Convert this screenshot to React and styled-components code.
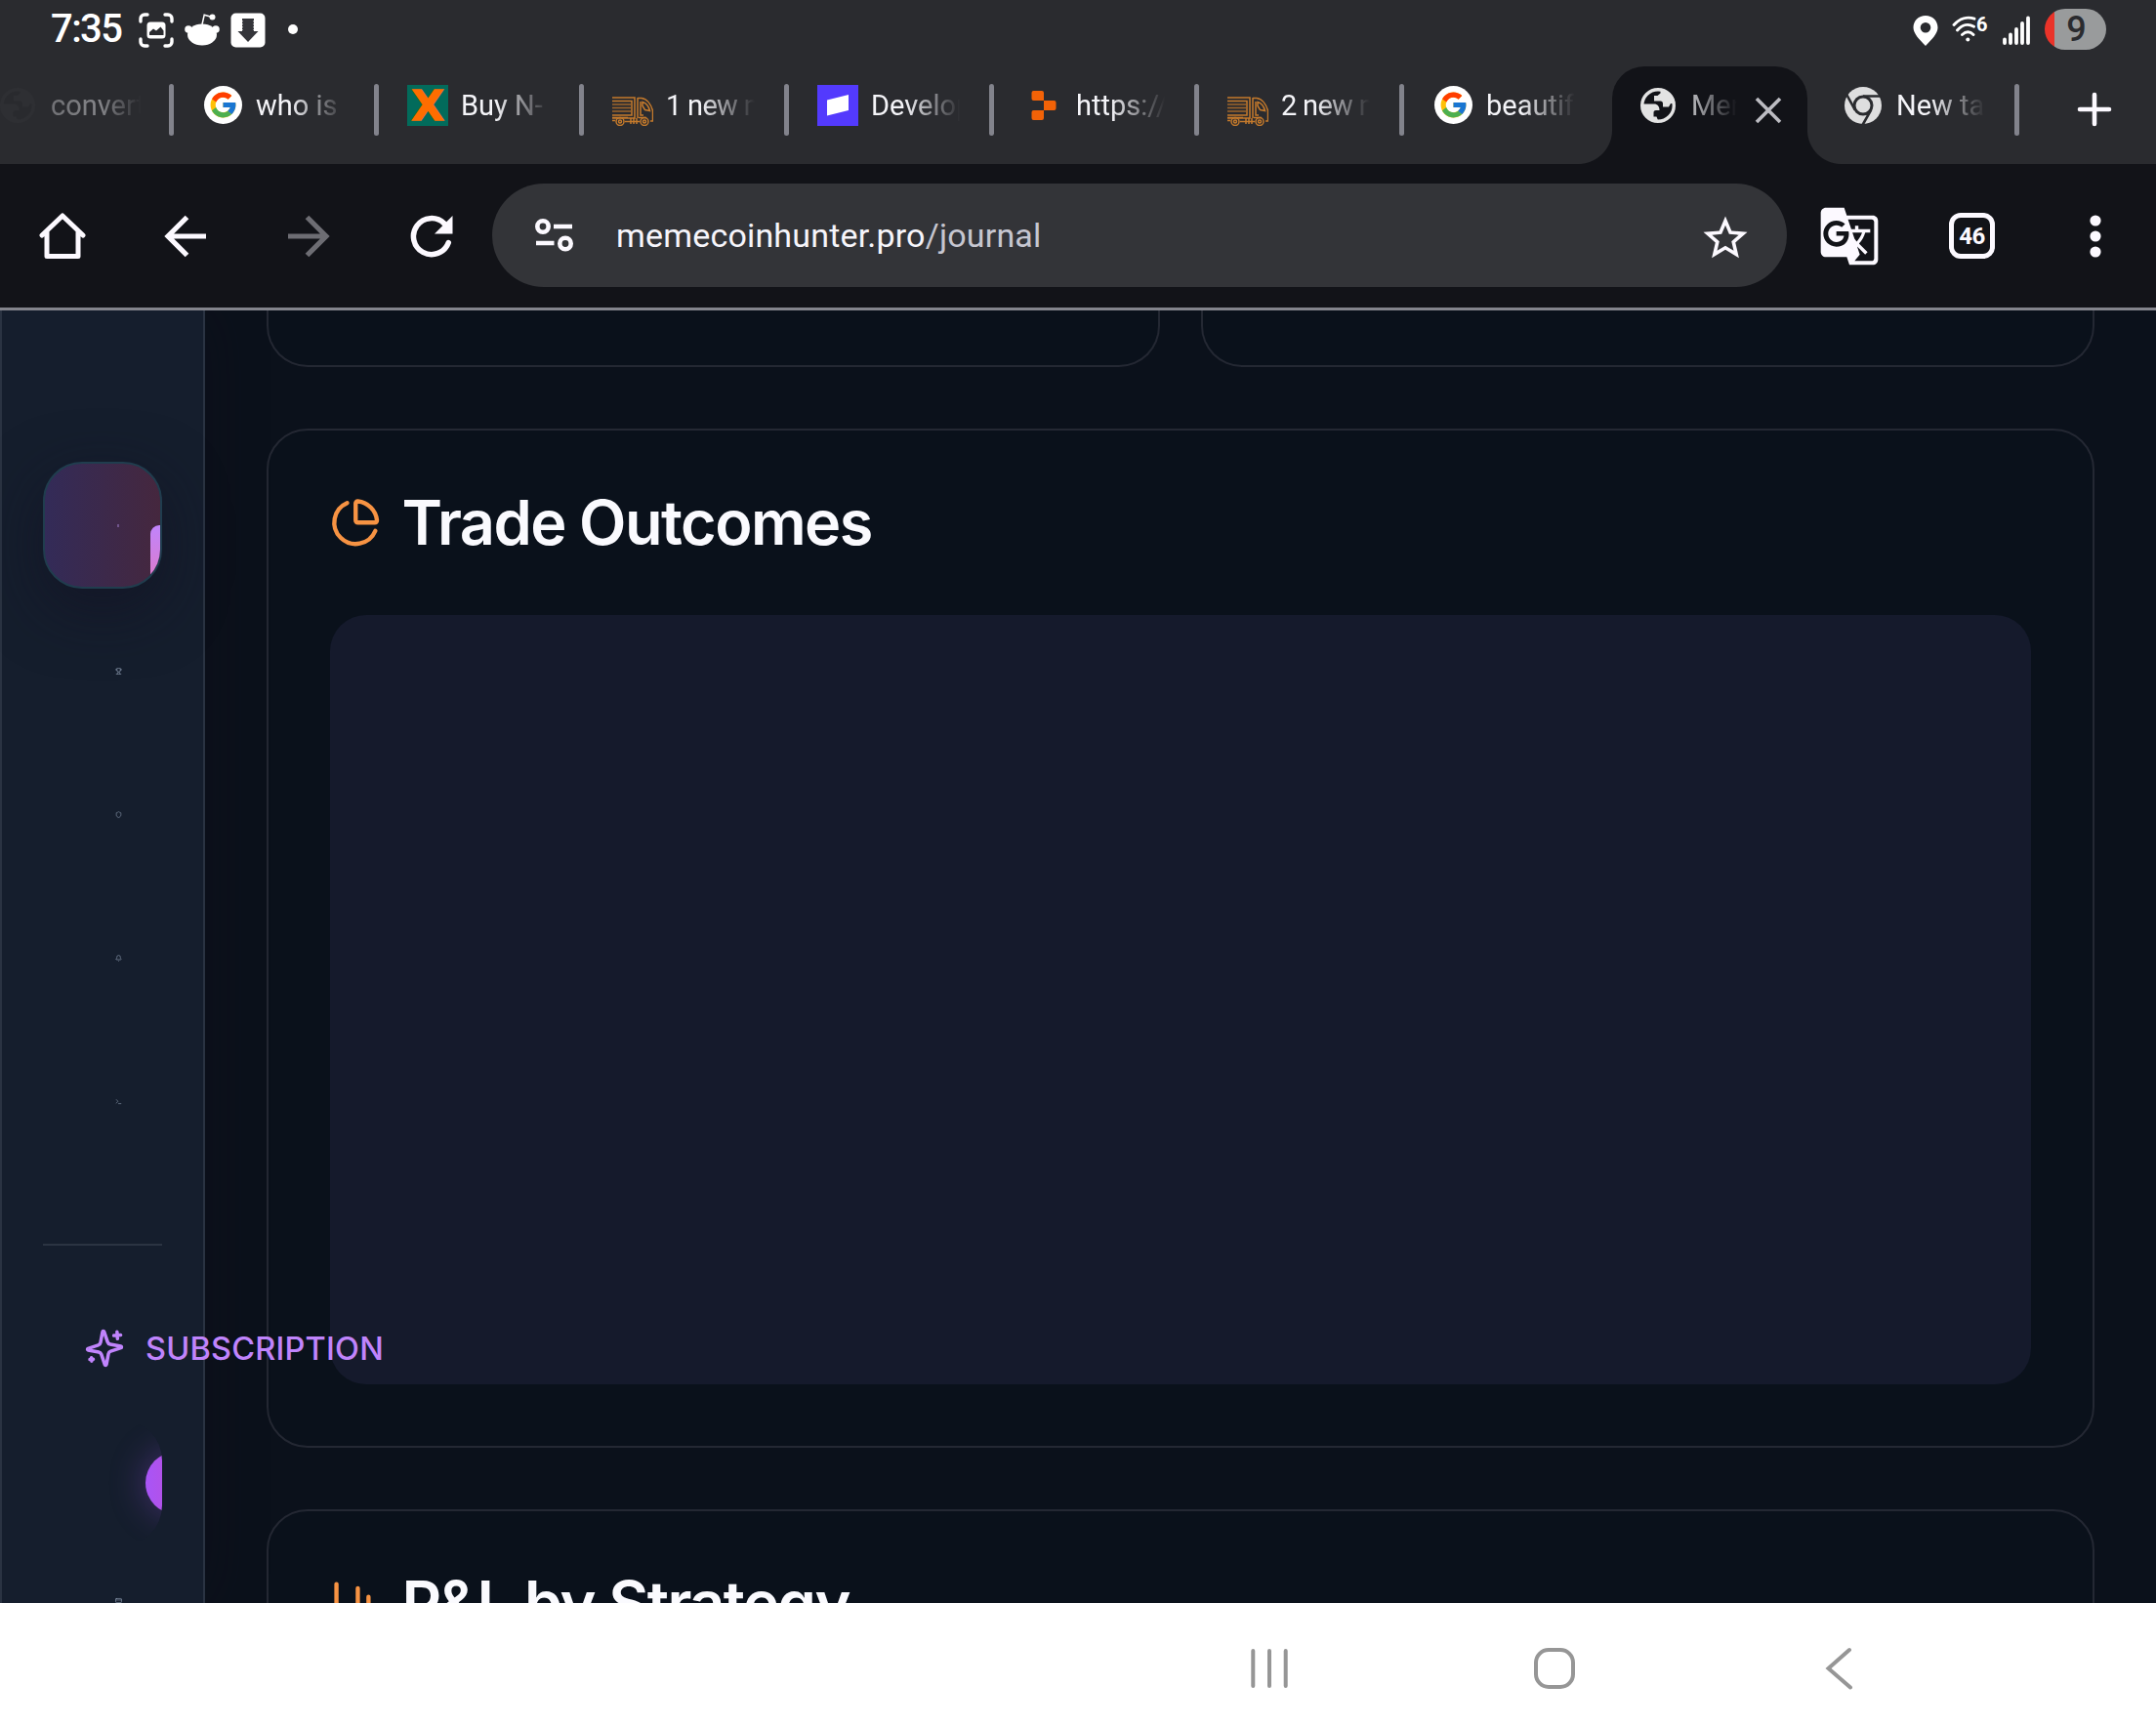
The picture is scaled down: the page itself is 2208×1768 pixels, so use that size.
import React from "react";
import styled, { createGlobalStyle, css } from "styled-components";
import { Trophy, Shield, Bell, Terminal, CreditCard } from "lucide-react";
import { FcGoogle } from "react-icons/fc";
import { MdGTranslate, MdStarBorder } from "react-icons/md";

const GlobalStyle = createGlobalStyle`
  * { box-sizing: border-box; }
  html, body { margin: 0; padding: 0; overflow: hidden; background: #0b111b; }
  svg { display: block; flex: none; }
`;

const ui = `Roboto, "Liberation Sans", sans-serif`;
const inter = `Inter, "Liberation Sans", sans-serif`;

const Screen = styled.div`
  display: flex;
  flex-direction: column;
  width: 2208px;
  height: 1768px;
  overflow: hidden;
  font-family: ${ui};
`;

/* ---------- status bar ---------- */
const StatusBar = styled.div`
  display: flex;
  justify-content: space-between;
  height: 68px;
  padding: 0 51px 0 52px;
  background: #2a2b2f;
  flex: none;
`;
const StatusGroup = styled.div`
  display: flex;
  align-items: center;
  height: 62px;
  gap: ${(p) => p.$gap}px;
`;
const Clock = styled.div`
  width: 79px;
  margin-top: -3px;
  font-size: 40px;
  font-weight: 500;
  line-height: 48px;
  letter-spacing: -1.6px;
  color: #fff;
`;
const Dot = styled.div`
  width: 10px;
  height: 10px;
  margin: -2px 0 0 12px;
  border-radius: 50%;
  background: #fff;
`;
const Battery = styled.div`
  display: flex;
  align-items: center;
  justify-content: center;
  width: 63px;
  height: 42px;
  margin: -2px 0 0 1px;
  border-radius: 21px;
  background: linear-gradient(90deg, #ea3329 10px, #999b9c 10px);
  color: #2a2b2f;
  font-size: 36px;
  font-weight: 500;
  line-height: 42px;
  padding: 0 0 1px 2px;
`;

/* ---------- tab strip ---------- */
const TabStrip = styled.div`
  display: flex;
  height: 100px;
  background: #2a2b2f;
  flex: none;
`;
const Tab = styled.div`
  position: relative;
  display: flex;
  align-items: flex-start;
  width: 210px;
  padding: 19px 0 0 29px;
  flex: none;
  &:first-child { margin-left: -32px; }
`;
const TabShape = styled.div`
  position: absolute;
  inset: 0 7px 0 3px;
  border-radius: 33px 33px 0 0;
  background: #121318;
  &::before, &::after {
    content: "";
    position: absolute;
    bottom: 0;
    width: 35px;
    height: 35px;
  }
  &::before { left: -35px; background: radial-gradient(circle at 0 0, transparent 34.5px, #121318 35.5px); }
  &::after { right: -35px; background: radial-gradient(circle at 100% 0, transparent 34.5px, #121318 35.5px); }
`;
const Favicon = styled.div`
  position: relative;
  display: flex;
  align-items: center;
  justify-content: center;
  width: 42px;
  height: 42px;
  flex: none;
  opacity: ${(p) => (p.$dim ? 0.02 : 1)};
  background: ${(p) => p.$bg || "transparent"};
  color: #e3e3e3;
`;
const GoogleDisc = styled.div`
  display: flex;
  align-items: center;
  justify-content: center;
  width: 39px;
  height: 39px;
  margin-top: -1px;
  border-radius: 50%;
  background: #fff;
`;
const XMark = styled.span`
  font-family: "DejaVu Sans", sans-serif;
  font-weight: 700;
  font-size: 43px;
  line-height: 42px;
  color: #ff6d00;
  -webkit-text-stroke: 1.5px #ff6d00;
`;
const TabTitle = styled.div`
  position: relative;
  width: ${(p) => (p.$active ? 47 : 93)}px;
  margin-left: 13px;
  overflow: hidden;
  white-space: nowrap;
  font-size: 29px;
  line-height: 42px;
  letter-spacing: ${(p) => (p.$tight ? -0.7 : 0)}px;
  color: #f4f4f8;
  mask-image: ${(p) =>
    p.$faded
      ? "linear-gradient(90deg, rgba(0,0,0,.35), rgba(0,0,0,.45) 55%, transparent)"
      : p.$active
      ? "linear-gradient(90deg, rgba(0,0,0,.75), transparent)"
      : "linear-gradient(90deg, #000 38%, transparent 98%)"};
`;
const CloseWrap = styled.div`
  position: relative;
  margin: 12px 0 0 18px;
`;
const TabDivider = styled.div`
  position: absolute;
  right: 0;
  top: 18px;
  width: 5px;
  height: 53px;
  border-radius: 3px;
  background: #82838c;
`;
const NewTab = styled.div`
  display: flex;
  justify-content: center;
  width: 140px;
  padding: 26px 0 0 13px;
`;

/* ---------- toolbar ---------- */
const Toolbar = styled.div`
  display: flex;
  align-items: center;
  height: 150px;
  border-bottom: 3px solid #83848c;
  background: #121318;
  flex: none;
`;
const ToolCell = styled.div`
  display: flex;
  align-items: center;
  justify-content: center;
  width: 126px;
  padding-left: 1px;
  color: #fcf9ff;
`;
const Omnibox = styled.div`
  display: flex;
  align-items: center;
  width: 1326px;
  height: 106px;
  margin-top: -1px;
  border-radius: 53px;
  padding: 0 36px 0 43px;
  background: #333438;
  color: #fcf9ff;
  > svg:last-child { margin-top: 6px; }
`;
const Url = styled.div`
  flex: 1;
  margin-left: 42px;
  font-size: 34px;
  line-height: 44px;
  letter-spacing: 0.18px;
  white-space: nowrap;
  color: #f6f5fb;
  span { color: #c6c6d0; }
`;
const TabCount = styled.div`
  display: flex;
  align-items: center;
  justify-content: center;
  width: 47px;
  height: 47px;
  border: 5px solid #fcf9ff;
  border-radius: 12px;
  font-size: 24px;
  font-weight: 700;
  letter-spacing: -0.5px;
`;

/* ---------- page ---------- */
const Page = styled.div`
  display: flex;
  height: 1324px;
  overflow: hidden;
  background: #0b111b;
  font-family: ${inter};
  flex: none;
`;
const Sidebar = styled.aside`
  position: relative;
  z-index: 1;
  width: 210px;
  height: 1324px;
  padding: 155px 42px 0;
  border: solid #2a3342;
  border-width: 0 2px;
  background: #151e2d;
  box-shadow: 0 0 60px rgba(20, 14, 26, 0.3);
  flex: none;
`;
const NavItem = styled.div`
  position: relative;
  display: flex;
  align-items: center;
  height: 130px;
  margin-bottom: 17px;
  padding-left: 74px;
  border-radius: 40px;
  color: #94a3b8;
  ${(p) =>
    p.$active &&
    css`
      margin-bottom: 19px;
      overflow: hidden;
      border: 2px solid #203d4e;
      background: linear-gradient(90deg, #332b58, #45273e);
      box-shadow: 0 20px 62px 2px rgba(19, 17, 34, 0.55);
    `}
`;
const Speck = styled.div`
  width: 2px;
  height: 3px;
  background: #70548c;
`;
const Indicator = styled.div`
  position: absolute;
  right: 0;
  top: 63px;
  width: 10px;
  height: 63px;
  border-radius: 9px 0 0 0;
  background: linear-gradient(#c084fc, #e07ac4);
`;
const SideRule = styled.div`
  height: 2px;
  margin-top: 81px;
  background: #2b3442;
`;
const SectionLabel = styled.div`
  display: flex;
  align-items: center;
  gap: 21px;
  height: 42px;
  margin: 84px 0 52px 42px;
  color: #c084fc;
  font-size: 32.5px;
  font-weight: 500;
  letter-spacing: 0.2px;
  white-space: nowrap;
`;
const PromoItem = styled.div`
  height: 130px;
  padding: 33px 0 0 105px;
  border-radius: 42px;
  overflow: hidden;
`;
const PromoDisc = styled.div`
  width: 64px;
  height: 64px;
  border-radius: 50%;
  background: linear-gradient(90deg, #a855f7, #c94bc8);
  box-shadow: 0 0 36px rgba(168, 85, 247, 0.34);
`;
const LastItem = styled.div`
  padding: 52px 0 0 74px;
  color: #94a3b8;
`;

const Content = styled.main`
  display: flex;
  flex-direction: column;
  gap: 63px;
  flex: 1;
  padding: 0 63px;
`;
const CardRow = styled.div`
  display: flex;
  gap: 42px;
  flex: none;
`;
const Card = styled.section`
  flex: none;
  height: ${(p) => p.$h}px;
  padding: 63px;
  border: 2px solid #242833;
  border-radius: 42px;
  background: #0a111b;
`;
const CardStub = styled.section`
  flex: 1;
  height: 58px;
  border: 2px solid #242833;
  border-top: 0;
  border-radius: 0 0 42px 42px;
  background: #0a111b;
`;
const CardTitle = styled.h2`
  display: flex;
  align-items: center;
  gap: 21px;
  height: 63px;
  margin: 0 0 63px;
  font-size: 63px;
  font-weight: 600;
  line-height: 63px;
  letter-spacing: -1.575px;
  white-space: nowrap;
  color: #fafafe;
`;
const ChartArea = styled.div`
  height: 788px;
  border-radius: 37px;
  background: #151a2c;
`;

/* ---------- system navigation ---------- */
const SystemNav = styled.div`
  display: flex;
  align-items: center;
  gap: 248px;
  height: 126px;
  padding: 8px 0 0 1278px;
  background: #fff;
  flex: none;
`;

/* ---------- drawings ---------- */
const CaptureIcon = () => (
  <svg width="36" height="36" viewBox="0 0 36 36" fill="none" stroke="#fff" strokeWidth="3.4" strokeLinecap="round">
    <path d="M2 9V6a4 4 0 0 1 4-4h3M27 2h3a4 4 0 0 1 4 4v3M34 27v3a4 4 0 0 1-4 4h-3M9 34H6a4 4 0 0 1-4-4v-3" />
    <rect x="8.5" y="9.5" width="19" height="17" rx="3.5" fill="#fff" stroke="none" />
    <path d="M11 23v-3l4-3.5 3 2 4.5-4 3 4V23z" fill="#2a2b2f" stroke="none" />
  </svg>
);
const RedditIcon = () => (
  <svg width="36" height="36" viewBox="0 0 36 36" fill="#fff">
    <ellipse cx="18" cy="22.5" rx="15" ry="11" />
    <circle cx="4" cy="17" r="3.8" />
    <circle cx="32" cy="17" r="3.8" />
    <circle cx="28.5" cy="4.5" r="3" />
    <path d="M18 12l2.2-9.7 7 1.9" fill="none" stroke="#fff" strokeWidth="1.5" />
  </svg>
);
const DownloadIcon = () => (
  <svg width="36" height="36" viewBox="0 0 36 36">
    <rect x=".5" y=".5" width="35" height="35" rx="5" fill="#fff" />
    <path d="M12 6h12v13h4.5L18 30 7.5 19H12z" fill="#34353a" />
    <path d="M12.3 8v10M23.7 8v10" stroke="#fff" strokeWidth="1.2" strokeDasharray="1.5 1.5" opacity=".6" />
  </svg>
);
const PinIcon = () => (
  <svg width="26" height="31" viewBox="0 0 26 31">
    <path fillRule="evenodd" fill="#fff" d="M13 0C5.8 0 .5 5.3.5 12.2.5 18.5 6.500 24 13 31c6.500-7 12.500-12.500 12.500-18.800C25.500 5.300 20.200 0 13 0zm0 7a5.300 5.300 0 1 1 0 10.600A5.300 5.300 0 0 1 13 7z" />
  </svg>
);
const WifiWrap = styled.div`
  display: flex;
  align-items: flex-start;
  width: 38px;
  height: 31px;
`;
const WifiGeneration = styled.span`
  margin: -3px 0 0 -11px;
  font-size: 20px;
  font-weight: 700;
  line-height: 24px;
  color: #fff;
`;
const WifiIcon = () => (
  <WifiWrap>
    <svg width="36" height="28" viewBox="0 0 36 28" fill="none" stroke="#fff" strokeWidth="2.9" strokeLinecap="round">
      <path d="M2 9.500C8 2.500 16 .8 23 3.200M5.500 15C10.500 9 17 8 22.500 11.200M10.500 19.500c3.800-3.500 8-3.500 11.500 0" />
      <circle cx="16.300" cy="24.500" r="2" fill="#fff" stroke="none" />
    </svg>
    <WifiGeneration>6</WifiGeneration>
  </WifiWrap>
);
const SignalIcon = () => (
  <svg width="28" height="30" viewBox="0 0 28 30" stroke="#fff" strokeWidth="3.8" strokeLinecap="round">
    <path d="M2 28v-3.500M8 28v-8.500M14 28V14M20 28V8M26 28V2.500" />
  </svg>
);
const TruckIcon = () => (
  <svg width="42" height="42" viewBox="0 0 42 42" fill="none" stroke="#c47a2c" strokeWidth="1.5">
    <path d="M0 13h23v21H0M0 16.500h20v14.500H0M26 13v21M26 13.500h4c6 1 10 7 11.500 13V37H39M29 17v14h3M31 17.500c4 1 6.500 5 7.500 9l-5-1-2.500-4zM0 33.500h16M27 33.500h8M0 36.500h3M13 37.500h15M19 34v6M22 34v6M25 34v6" />
    <path d="M0 20h19M0 23.500h19M0 27h19" opacity=".75" />
    <circle cx="8" cy="37.500" r="4" />
    <circle cx="33" cy="37.500" r="4" />
    <circle cx="8" cy="37.500" r="1.500" />
    <circle cx="33" cy="37.500" r="1.500" />
  </svg>
);
const DevIcon = () => (
  <svg width="42" height="42" viewBox="0 0 42 42">
    <path d="M10 15.500L32 10v16L10 31.500z" fill="#fff" />
  </svg>
);
const BlocksIcon = () => (
  <svg width="42" height="42" viewBox="0 0 42 42" fill="#f26207">
    <path d="M11.500 6h8.500a2 2 0 0 1 2 2v8H11.500a2 2 0 0 1-2-2V8a2 2 0 0 1 2-2zM22 16h10.500a2 2 0 0 1 2 2v6a2 2 0 0 1-2 2H22zM9.500 28a2 2 0 0 1 2-2H22v8a2 2 0 0 1-2 2h-8.500a2 2 0 0 1-2-2z" />
  </svg>
);
const GlobeIcon = () => (
  <svg width="42" height="42" viewBox="0 0 42 42">
    <circle cx="21" cy="21" r="16.300" fill="#121318" stroke="#e3e3e3" strokeWidth="3.400" />
    <path d="M23.500 4.500v4l-3 2.500h-3.500v5.500h6.500c1.500 0 2.500 1 2.500 2.500v3.500h6l2-3.500h4.500C38 11.500 32 5 23.500 4.500zM4.500 19.500H17c3.500 0 5.500 2.500 5.500 6.500h-3.500c-2 0-2.500 1-2.500 2.500v4h3l2 5C11 37.500 3.500 30 4.500 19.500z" fill="#e3e3e3" />
  </svg>
);
const ChromeIcon = () => (
  <svg width="40" height="40" viewBox="0 0 40 40">
    <circle cx="20" cy="20" r="19" fill="#dededf" />
    <circle cx="20" cy="20" r="9" fill="none" stroke="#2a2b2f" strokeWidth="3" />
    <path d="M20 10.500h18.500M11.800 24.700L3 8.500M28.200 24.700L19.500 40" stroke="#2a2b2f" strokeWidth="2.600" />
  </svg>
);
const CloseIcon = () => (
  <svg width="28" height="28" viewBox="0 0 28 28" stroke="#bcbcc2" strokeWidth="3.600">
    <path d="M2 2l24 24M26 2L2 26" />
  </svg>
);
const PlusIcon = () => (
  <svg width="36" height="36" viewBox="0 0 36 36" stroke="#fcf9ff" strokeWidth="4.600" strokeLinecap="round">
    <path d="M18 3v30M3 18h30" />
  </svg>
);
const HomeIcon = () => (
  <svg width="48" height="48" viewBox="0 0 48 48" fill="none" stroke="currentColor" strokeWidth="5" strokeLinecap="round" strokeLinejoin="round">
    <path d="M3 23L24 3l21 20M8 19v25.500h32V19" />
  </svg>
);
const Arrow = ({ forward }) => (
  <svg width="44" height="44" viewBox="0 0 44 44" fill="none" stroke={forward ? "#6d6d73" : "currentColor"} strokeWidth="5.200" transform={forward ? "scale(-1 1)" : undefined}>
    <path d="M43 22H5M23.500 2.500L4 22l19.500 19.500" />
  </svg>
);
const ReloadIcon = () => (
  <svg width="44" height="44" viewBox="0 0 44 44" fill="none">
    <path d="M39.300 28.500A18.500 18.500 0 1 1 35 9" stroke="currentColor" strokeWidth="5.500" strokeLinecap="round" />
    <path d="M43.500 1v18.500H25z" fill="currentColor" />
  </svg>
);
const TuneIcon = () => (
  <svg width="42" height="34" viewBox="0 0 42 34" fill="none" stroke="currentColor" strokeWidth="4.600">
    <circle cx="9" cy="8" r="5.700" />
    <path d="M20 8h19M2 25h18.500" />
    <circle cx="32" cy="25.500" r="5.700" />
  </svg>
);
const MenuDots = () => (
  <svg width="12" height="44" viewBox="0 0 12 44" fill="currentColor">
    <circle cx="6" cy="6" r="5.600" />
    <circle cx="6" cy="22" r="5.600" />
    <circle cx="6" cy="38" r="5.600" />
  </svg>
);
const CardIcon = ({ paths }) => (
  <svg width="52.500" height="52.500" viewBox="0 0 24 24" fill="none" stroke="#f79343" strokeWidth="2" strokeLinecap="round" strokeLinejoin="round">
    {paths.map((d) => <path key={d} d={d} />)}
  </svg>
);
const piePaths = [
  "M21 12c.552 0 1.005-.449.95-.998a10 10 0 0 0-8.953-8.951c-.55-.055-.998.398-.998.95v8a1 1 0 0 0 1 1z",
  "M21.210 15.890A10 10 0 1 1 8 2.830",
];
const barPaths = ["M3 3v16a2 2 0 0 0 2 2h16", "M18 17V9", "M13 17V5", "M8 17v-3"];
const SparklesIcon = () => (
  <svg width="42" height="42" viewBox="0 0 24 24" fill="none" stroke="currentColor" strokeWidth="2" strokeLinecap="round" strokeLinejoin="round">
    <g transform="rotate(-4 12 12)">
      <path d="M9.937 15.500A2 2 0 0 0 8.500 14.063l-6.135-1.582a.5.5 0 0 1 0-.962L8.500 9.936A2 2 0 0 0 9.937 8.500l1.582-6.135a.5.5 0 0 1 .963 0L14.063 8.500A2 2 0 0 0 15.500 9.937l6.135 1.581a.5.5 0 0 1 0 .964L15.500 14.063a2 2 0 0 0-1.437 1.437l-1.582 6.135a.5.5 0 0 1-.963 0z" />
      <path d="M20 3v4M22 5h-4M4 17v2M5 18H3" />
    </g>
  </svg>
);
const RecentsIcon = () => (
  <svg width="44" height="42" viewBox="0 0 44 42" stroke="#969696" strokeWidth="4" strokeLinecap="round">
    <path d="M5.300 3v36M22 3v36M38.700 3v36" />
  </svg>
);
const NavHomeIcon = () => (
  <svg width="44" height="44" viewBox="0 0 44 44" fill="none" stroke="#969696" strokeWidth="4">
    <rect x="3" y="3" width="38" height="38" rx="13" />
  </svg>
);
const NavBackIcon = () => (
  <svg width="44" height="44" viewBox="0 0 44 44" fill="none" stroke="#969696" strokeWidth="4" strokeLinecap="round">
    <path d="M32 3L10.500 22 33 41.500" />
  </svg>
);

const GoogleFavicon = () => (
  <Favicon><GoogleDisc><FcGoogle size={31} /></GoogleDisc></Favicon>
);
const TruckFavicon = () => <Favicon><TruckIcon /></Favicon>;

const tabs = [
  { title: "convert", icon: <Favicon $dim><GlobeIcon /></Favicon>, faded: true },
  { title: "who is s", icon: <GoogleFavicon /> },
  { title: "Buy N-", icon: <Favicon $bg="#026b5b"><XMark>X</XMark></Favicon> },
  { title: "1 new m", icon: <TruckFavicon />, tight: true },
  { title: "Develop", icon: <Favicon $bg="#533afd"><DevIcon /></Favicon> },
  { title: "https://", icon: <Favicon><BlocksIcon /></Favicon> },
  { title: "2 new m", icon: <TruckFavicon />, tight: true },
  { title: "beautifu", icon: <GoogleFavicon />, noDivider: true },
  { title: "Mem", icon: <Favicon><GlobeIcon /></Favicon>, active: true },
  { title: "New tab", icon: <Favicon><ChromeIcon /></Favicon> },
];

const navIcons = [Trophy, Shield, Bell, Terminal];

export default function App() {
  return (
    <Screen>
      <GlobalStyle />
      <StatusBar>
        <StatusGroup $gap={11}>
          <Clock>7:35</Clock>
          <CaptureIcon />
          <RedditIcon />
          <DownloadIcon />
          <Dot />
        </StatusGroup>
        <StatusGroup $gap={14}>
          <PinIcon />
          <WifiIcon />
          <SignalIcon />
          <Battery>9</Battery>
        </StatusGroup>
      </StatusBar>

      <TabStrip>
        {tabs.map((t, i) => (
          <Tab key={i}>
            {t.active && <TabShape />}
            {t.icon}
            <TabTitle $active={t.active} $faded={t.faded} $tight={t.tight}>{t.title}</TabTitle>
            {t.active ? <CloseWrap><CloseIcon /></CloseWrap> : !t.noDivider && <TabDivider />}
          </Tab>
        ))}
        <NewTab><PlusIcon /></NewTab>
      </TabStrip>

      <Toolbar>
        <ToolCell><HomeIcon /></ToolCell>
        <ToolCell><Arrow /></ToolCell>
        <ToolCell><Arrow forward /></ToolCell>
        <ToolCell><ReloadIcon /></ToolCell>
        <Omnibox>
          <TuneIcon />
          <Url>memecoinhunter.pro<span>/journal</span></Url>
          <MdStarBorder size={54} />
        </Omnibox>
        <ToolCell><MdGTranslate size={64} /></ToolCell>
        <ToolCell><TabCount>46</TabCount></ToolCell>
        <ToolCell><MenuDots /></ToolCell>
      </Toolbar>

      <Page>
        <Sidebar>
          <NavItem $active>
            <Speck />
            <Indicator />
          </NavItem>
          {navIcons.map((Icon, i) => (
            <NavItem key={i}><Icon size={7} /></NavItem>
          ))}
          <SideRule />
          <SectionLabel><SparklesIcon />SUBSCRIPTION</SectionLabel>
          <PromoItem><PromoDisc /></PromoItem>
          <LastItem><CreditCard size={7} /></LastItem>
        </Sidebar>
        <Content>
          <CardRow>
            <CardStub />
            <CardStub />
          </CardRow>
          <Card $h={1044}>
            <CardTitle><CardIcon paths={piePaths} />Trade Outcomes</CardTitle>
            <ChartArea />
          </Card>
          <Card $h={400}>
            <CardTitle><CardIcon paths={barPaths} />P&amp;L by Strategy</CardTitle>
          </Card>
        </Content>
      </Page>

      <SystemNav>
        <RecentsIcon />
        <NavHomeIcon />
        <NavBackIcon />
      </SystemNav>
    </Screen>
  );
}
